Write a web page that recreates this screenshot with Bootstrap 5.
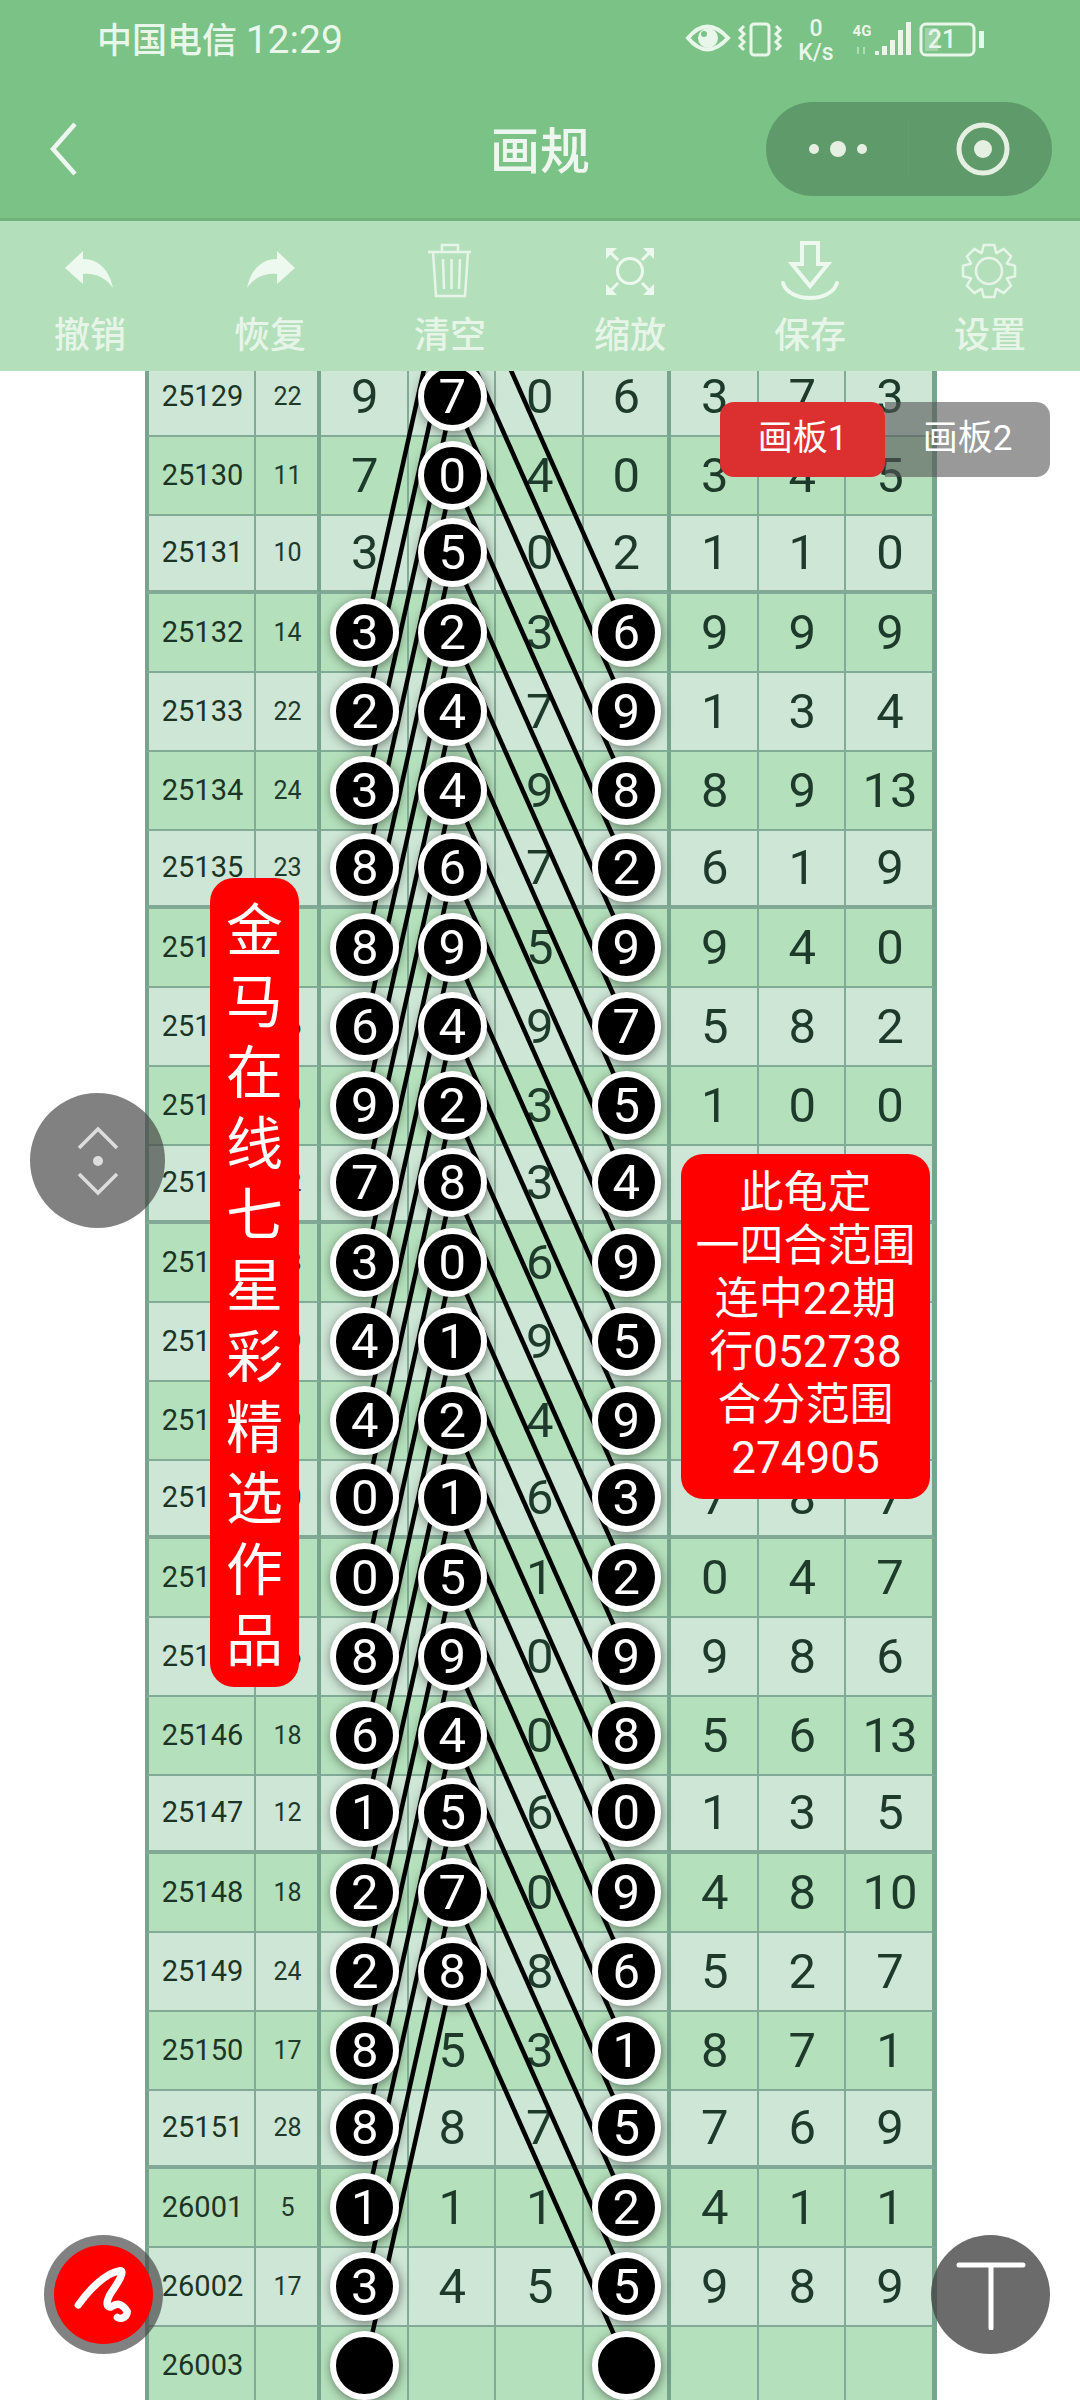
<!DOCTYPE html>
<html lang="zh">
  <head>
    <meta charset="UTF-8" />
    <meta name="viewport" content="width=device-width, initial-scale=1.0" />
    <title>画规</title>
    <link
      rel="stylesheet"
      href="https://cdn.jsdelivr.net/npm/bootstrap@5.3.0/dist/css/bootstrap.min.css"
    />
    <style>
      body {
        width: 1080px;
        height: 2400px;
        overflow: hidden;
        background: #fff;
        font-family: Roboto, "Noto Sans CJK SC", sans-serif;
      }
      .app-head {
        background: #7ac285;
        color: #e9f6ea;
        border-bottom: 3px solid #70b17b;
      }
      .status-line {
        height: 80px;
        padding: 0 95px 0 97px;
        font-size: 35px;
        font-weight: 500;
        line-height: 1;
      }
      .status-time {
        font-size: 39px;
        font-weight: 400;
      }
      .nav-line {
        height: 138px;
      }
      .nav-side {
        width: 330px;
      }
      .nav-title {
        padding-top: 6px;
        font-size: 50px;
        font-weight: 500;
        color: #eef7ef;
      }
      .capsule {
        width: 286px;
        height: 94px;
        margin-right: 28px;
        border-radius: 47px;
        background: #5f9a6a;
      }
      .capsule > div {
        flex: 1 1 50%;
      }
      .capsule-dots {
        margin-right: -3px;
      }
      .capsule > div + div {
        padding-left: 6px;
        border-left: 1px solid #659f70;
      }
      .tool-bar {
        height: 150px;
        background: #b3e0ba;
        color: #e6f5e8;
        position: relative;
        z-index: 6;
      }
      .tool-item {
        padding-top: 20px;
      }
      .tool-label {
        font-size: 36px;
        font-weight: 500;
        line-height: 1;
        margin-top: 21px;
      }
      .tool-icon {
        margin-bottom: -4px;
      }
      .sheet-view {
        height: 2029px;
        overflow: hidden;
      }
      .sheet {
        position: relative;
        display: grid;
        width: 792px;
        margin: -13px 0 0 145px;
        grid-template-columns: 111px 65px repeat(6, 87.5px) 91px;
        grid-auto-rows: 78.75px;
        color: #1d3a2b;
        font-size: 49px;
        line-height: 1;
      }
      .cell {
        padding-left: 2px;
        border-right: 2px solid #82ab97;
        border-bottom: 2px solid #82ab97;
      }
      .row-light { background: #cee6d6; }
      .row-dark { background: #b4e0bb; }
      .cell-issue {
        border-left: 4px solid #76a48d;
        font-size: 29px;
        color: #1a3526;
      }
      .cell-sum {
        font-size: 25px;
        border-right: 4px solid #76a48d;
      }
      .cell-split { border-right: 4px solid #76a48d; }
      .cell-last { border-right: 5px solid #76a48d; }
      .cell-cut { border-bottom: 4px solid #82a896; }
      .ball {
        position: relative;
        z-index: 3;
        flex: none;
        width: 69px;
        height: 69px;
        border: 6px solid #fff;
        border-radius: 50%;
        background: #000;
        color: #fff;
        font-weight: 400;
        box-shadow: 1px 2px 11px rgba(0, 0, 0, 0.5);
      }
      .rule-lines {
        position: absolute;
        left: 0;
        top: 0;
        z-index: 2;
      }
      .panel-tabs {
        position: absolute;
        left: 720px;
        top: 402px;
        z-index: 5;
        height: 75px;
        font-size: 35px;
        color: #fff;
      }
      .panel-tab {
        width: 165px;
      }
      .panel-on {
        background: #dc2f2f;
        border-radius: 14px;
      }
      .panel-off {
        background: rgba(85, 85, 85, 0.6);
        border-radius: 0 14px 14px 0;
      }
      .note-side {
        position: absolute;
        left: 210px;
        top: 878px;
        z-index: 5;
        width: 89px;
        height: 809px;
        padding-top: 18px;
        background: #f00;
        border-radius: 24px;
        color: #fff;
        font-size: 57px;
        line-height: 71px;
      }
      .note-box {
        position: absolute;
        left: 681px;
        top: 1154px;
        z-index: 5;
        width: 249px;
        height: 345px;
        padding-top: 13px;
        background: #f00;
        border-radius: 22px;
        color: #fff;
        font-size: 44px;
        line-height: 53px;
      }
      .float-zoom {
        position: absolute;
        left: 30px;
        top: 1093px;
        z-index: 5;
        width: 135px;
        height: 135px;
        border-radius: 50%;
        background: rgba(70, 70, 70, 0.68);
      }
      .float-pen {
        position: absolute;
        left: 54px;
        top: 2245px;
        z-index: 5;
        width: 99px;
        height: 99px;
        border-radius: 50%;
        background: #f00;
        box-shadow: 0 0 0 10px rgba(70, 70, 70, 0.68);
      }
      .float-text {
        position: absolute;
        left: 931px;
        top: 2235px;
        z-index: 5;
        width: 119px;
        height: 119px;
        border-radius: 50%;
        background: rgba(70, 70, 70, 0.8);
      }
    </style>
  </head>

  <body class="position-relative m-0">
    <!-- Status bar + title -->
    <div class="app-head">
      <div class="status-line d-flex justify-content-between align-items-center">
        <span>中国电信 <span class="status-time">12:29</span></span>
        <svg width="300" height="70" viewBox="685 5 300 70" fill="none" stroke="#e9f6ea">
          <path d="M688 38Q707 15 728 38Q707 61 688 38Z" stroke-width="4" />
          <circle cx="708" cy="38" r="10" fill="#e9f6ea" stroke="none" />
          <circle cx="704" cy="34" r="3" fill="#7ac285" stroke="none" />
          <rect x="751" y="24" width="18" height="31" rx="3" stroke-width="3" />
          <path d="M744 26l-4 4 4 4-4 4 4 4-4 4 4 4M776 26l4 4-4 4 4 4-4 4 4 4-4 4" stroke-width="3" />
          <g fill="#e9f6ea" stroke="none" text-anchor="middle" font-family="Roboto, sans-serif">
            <text x="816" y="36" font-size="23">0</text>
            <text x="816" y="60" font-size="23">K/s</text>
            <text x="862" y="36" font-size="15" font-weight="700">4G</text>
            <text x="942" y="48" font-size="25">21</text>
          </g>
          <g fill="#e9f6ea" stroke="none">
            <rect x="875" y="51" width="4" height="4" />
            <rect x="882" y="46" width="5" height="9" />
            <rect x="890" y="40" width="5" height="15" />
            <rect x="898" y="30" width="5" height="25" />
            <rect x="906" y="22" width="5" height="33" />
            <rect x="979" y="31" width="5" height="17" />
            <rect x="925" y="28" width="13" height="23" opacity="0.35" />
          </g>
          <path d="M858 47v7M864 47v7" stroke-width="2" opacity="0.5" />
          <rect x="921" y="24" width="53" height="31" rx="5" stroke-width="3" />
        </svg>
      </div>
      <div class="nav-line d-flex align-items-center">
        <div class="nav-side">
          <svg class="d-block ms-5" width="30" height="54" viewBox="0 0 30 54" fill="none" stroke="#eef7ef" stroke-width="4.5">
            <path d="M27 2L5 27L27 52" />
          </svg>
        </div>
        <div class="nav-title flex-grow-1 text-center">画规</div>
        <div class="nav-side d-flex justify-content-end">
          <div class="capsule d-flex align-items-center">
            <div class="capsule-dots d-flex justify-content-center">
              <svg width="64" height="20" viewBox="0 0 64 20" fill="#e6f0e2">
                <circle cx="8" cy="10" r="5" />
                <circle cx="32" cy="10" r="8" />
                <circle cx="56" cy="10" r="5" />
              </svg>
            </div>
            <div class="d-flex justify-content-center">
              <svg width="56" height="56" viewBox="0 0 56 56" fill="#e6f0e2" stroke="#e6f0e2">
                <circle cx="28" cy="28" r="24" fill="none" stroke-width="5" />
                <circle cx="28" cy="28" r="9" stroke="none" />
              </svg>
            </div>
          </div>
        </div>
      </div>
    </div>

    <!-- Toolbar -->
    <div class="tool-bar row g-0 text-center">
      <div class="col-2 tool-item">
        <svg class="tool-icon d-block mx-auto" width="60" height="60" viewBox="0 0 60 60" fill="#edf8ef">
          <path d="M5 27L23 10V18C40 18 50 31 53 47C46 37 36 32 23 33V43Z" />
        </svg>
        <div class="tool-label">撤销</div>
      </div>
      <div class="col-2 tool-item">
        <svg class="tool-icon d-block mx-auto" width="60" height="60" viewBox="0 0 60 60" fill="#edf8ef">
          <path d="M55 27L37 10V18C20 18 10 31 7 47C14 37 24 32 37 33V43Z" />
        </svg>
        <div class="tool-label">恢复</div>
      </div>
      <div class="col-2 tool-item">
        <svg class="tool-icon d-block mx-auto" width="60" height="60" viewBox="0 0 60 60" fill="none" stroke="#e6f5e8" stroke-width="2.5">
          <path d="M8 11H51M22 11V4H38V11M13 11L16 55H45L48 11M23 18L24 48M31.5 18V48M40 18L39 48" />
        </svg>
        <div class="tool-label">清空</div>
      </div>
      <div class="col-2 tool-item">
        <svg class="tool-icon d-block mx-auto" width="60" height="60" viewBox="0 0 60 60" fill="#edf8ef" stroke="#edf8ef">
          <circle cx="30" cy="30" r="12.5" fill="none" stroke-width="3" />
          <path d="M6 7H17L6 18ZM54 7H43L54 18ZM6 54H17L6 43ZM54 54H43L54 43Z" stroke="none" />
          <path d="M9 10L18 19M51 10L42 19M9 51L18 42M51 51L42 42" fill="none" stroke-width="3" />
        </svg>
        <div class="tool-label">缩放</div>
      </div>
      <div class="col-2 tool-item">
        <svg class="tool-icon d-block mx-auto" width="60" height="60" viewBox="0 0 60 60" fill="none" stroke="#edf8ef" stroke-width="4">
          <path d="M22 2H38V23H48L30 45L12 23H22Z" />
          <path d="M3 42C9 62 51 62 57 42" stroke-linecap="round" />
        </svg>
        <div class="tool-label">保存</div>
      </div>
      <div class="col-2 tool-item">
        <svg class="tool-icon d-block mx-auto" width="60" height="60" viewBox="0 0 60 60" fill="none" stroke="#e6f5e8" stroke-width="2.5">
          <path id="gear-edge" stroke-linejoin="round" />
          <circle cx="29" cy="30" r="13" />
        </svg>
        <div class="tool-label">设置</div>
      </div>
    </div>

    <!-- Chart sheet, scrolled a little under the toolbar -->
    <div class="sheet-view">
      <div class="sheet" id="sheet"></div>
    </div>

    <!-- Floating things on top of the sheet -->
    <div class="panel-tabs d-flex">
      <div class="panel-tab panel-on d-flex justify-content-center align-items-center">画板1</div>
      <div class="panel-tab panel-off d-flex justify-content-center align-items-center">画板2</div>
    </div>

    <div class="note-side text-center">金<br />马<br />在<br />线<br />七<br />星<br />彩<br />精<br />选<br />作<br />品</div>

    <div class="note-box text-center">此龟定<br />一四合范围<br />连中22期<br />行052738<br />合分范围<br />274905</div>

    <div class="float-zoom d-flex justify-content-center align-items-center">
      <svg width="44" height="72" viewBox="0 0 44 72" fill="none" stroke="#ddd" stroke-width="3.5">
        <path d="M3 23L22 4L41 23M3 49L22 68L41 49" />
        <circle cx="22" cy="36" r="5" fill="#ddd" stroke="none" />
      </svg>
    </div>

    <div class="float-pen">
      <svg class="d-block" width="99" height="99" viewBox="42 45 297 297" fill="none" stroke="#fff" stroke-width="22" stroke-linecap="round" stroke-linejoin="round">
        <path d="M115 225C150 175 200 128 240 122C255 122 240 150 212 190C195 220 200 235 215 230C235 215 250 225 262 245C260 265 240 268 232 262" />
      </svg>
    </div>

    <div class="float-text d-flex justify-content-center align-items-center">
      <svg width="70" height="70" viewBox="0 0 70 70" fill="none" stroke="#fff" stroke-width="5" stroke-linecap="round">
        <path d="M3 5H67M35 5V68" />
      </svg>
    </div>

    <script src="https://cdn.jsdelivr.net/npm/bootstrap@5.3.0/dist/js/bootstrap.bundle.min.js"></script>
    <script>
      // issue, a, b, c, d, e, f, g
      const draws = [
        [25129, 9, 7, 0, 6, 3, 7, 3],
        [25130, 7, 0, 4, 0, 3, 4, 5],
        [25131, 3, 5, 0, 2, 1, 1, 0],
        [25132, 3, 2, 3, 6, 9, 9, 9],
        [25133, 2, 4, 7, 9, 1, 3, 4],
        [25134, 3, 4, 9, 8, 8, 9, 13],
        [25135, 8, 6, 7, 2, 6, 1, 9],
        [25136, 8, 9, 5, 9, 9, 4, 0],
        [25137, 6, 4, 9, 7, 5, 8, 2],
        [25138, 9, 2, 3, 5, 1, 0, 0],
        [25139, 7, 8, 3, 4, 3, 5, 8],
        [25140, 3, 0, 6, 9, 2, 7, 9],
        [25141, 4, 1, 9, 5, 6, 1, 4],
        [25142, 4, 2, 4, 9, 8, 3, 6],
        [25143, 0, 1, 6, 3, 7, 8, 7],
        [25144, 0, 5, 1, 2, 0, 4, 7],
        [25145, 8, 9, 0, 9, 9, 8, 6],
        [25146, 6, 4, 0, 8, 5, 6, 13],
        [25147, 1, 5, 6, 0, 1, 3, 5],
        [25148, 2, 7, 0, 9, 4, 8, 10],
        [25149, 2, 8, 8, 6, 5, 2, 7],
        [25150, 8, 5, 3, 1, 8, 7, 1],
        [25151, 8, 8, 7, 5, 7, 6, 9],
        [26001, 1, 1, 1, 2, 4, 1, 1],
        [26002, 3, 4, 5, 5, 9, 8, 9],
        [26003, "", "", "", "", "", "", ""],
      ];

      const rowH = 78.75;
      const colA = 220; // centre of first digit column, inside the sheet
      const colB = 308;
      const colD = 483;
      const sheet = document.getElementById("sheet");

      function isBall(col, r) {
        if (col === 1 || col === 4) return r >= 3;
        if (col === 2) return r <= 20;
        return false;
      }

      draws.forEach((row, r) => {
        const tone = r % 2 ? "row-dark" : "row-light";
        const cut = r % 4 === 2 ? " cell-cut" : "";
        const sum = r < 25 ? row[1] + row[2] + row[3] + row[4] : "";
        const values = [row[0], sum].concat(row.slice(1));
        values.forEach((v, c) => {
          const cell = document.createElement("div");
          cell.className = `cell ${tone}${cut} d-flex justify-content-center align-items-center`;
          if (c === 0) cell.classList.add("cell-issue");
          if (c === 1) cell.classList.add("cell-sum");
          if (c === 5) cell.classList.add("cell-split");
          if (c === 8) cell.classList.add("cell-last");
          if (c >= 2 && isBall(c - 1, r)) {
            const ball = document.createElement("div");
            ball.className = "ball d-flex justify-content-center align-items-center";
            ball.textContent = v;
            cell.appendChild(ball);
          } else {
            cell.textContent = v;
          }
          sheet.appendChild(cell);
        });
      });

      // every marked row fans up to the middle column, five rows earlier
      let lines = "";
      for (let r = 3; r <= 25; r++) {
        const y1 = (r + 0.5) * rowH;
        const y2 = (r - 5 + 0.5) * rowH;
        lines += `<line x1="${colA}" y1="${y1}" x2="${colB}" y2="${y2}"/>`;
        lines += `<line x1="${colD}" y1="${y1}" x2="${colB}" y2="${y2}"/>`;
      }
      sheet.insertAdjacentHTML(
        "beforeend",
        `<svg class="rule-lines" width="792" height="2048" stroke="#000" stroke-width="4.5" style="overflow:visible">${lines}</svg>`
      );

      // gear outline, eight teeth
      let gear = "";
      for (let i = 0; i < 8; i++) {
        const t = (i * Math.PI) / 4;
        const pts = [
          [19.5, -0.38],
          [26.5, -0.2],
          [26.5, 0.2],
          [19.5, 0.38],
        ];
        pts.forEach(([rad, off], k) => {
          const x = (29 + rad * Math.cos(t + off)).toFixed(1);
          const y = (30 + rad * Math.sin(t + off)).toFixed(1);
          gear += `${i === 0 && k === 0 ? "M" : "L"}${x} ${y}`;
        });
      }
      document.getElementById("gear-edge").setAttribute("d", gear + "Z");
    </script>
  </body>
</html>
